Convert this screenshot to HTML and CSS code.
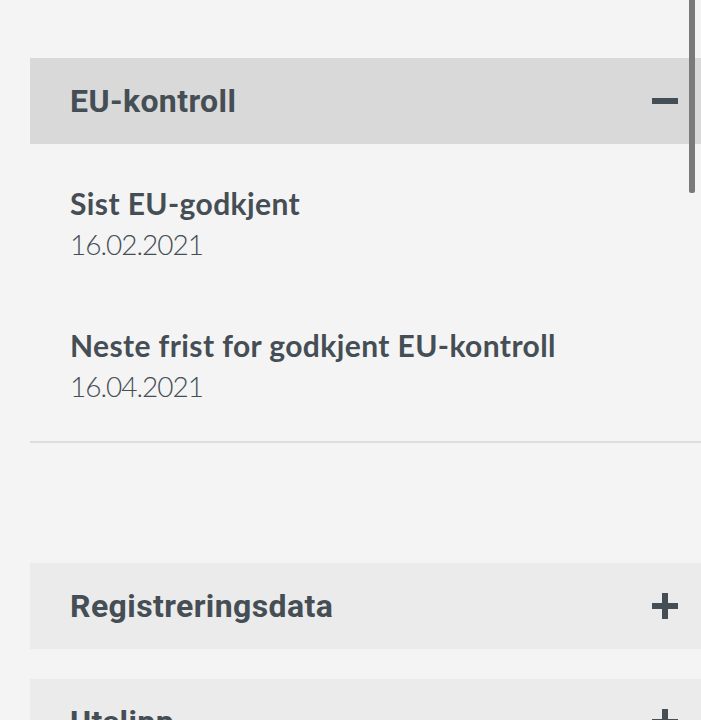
FILE: index.html
```html
<!DOCTYPE html>
<html lang="no">
<head>
<meta charset="utf-8">
<link rel="stylesheet" href="styles.css">
</head>
<body>
<main class="page">
  <section class="panel open">
    <div class="panel-head">
      <h2 class="panel-title">EU-kontroll</h2>
      <svg class="toggle" width="26" height="26" viewBox="0 0 26 26"><rect x="0" y="10" width="26" height="6" fill="#454e55"/></svg>
    </div>
    <div class="panel-body">
      <div class="item">
        <div class="item-label">Sist EU-godkjent</div>
        <div class="item-value">16.02.2021</div>
      </div>
      <div class="item">
        <div class="item-label">Neste frist for godkjent EU-kontroll</div>
        <div class="item-value">16.04.2021</div>
      </div>
    </div>
  </section>
  <section class="panel">
    <div class="panel-head">
      <h2 class="panel-title">Registreringsdata</h2>
      <svg class="toggle" width="26" height="26" viewBox="0 0 26 26"><rect x="0" y="10" width="26" height="6" fill="#454e55"/><rect x="10" y="0" width="6" height="26" fill="#454e55"/></svg>
    </div>
  </section>
  <section class="panel">
    <div class="panel-head">
      <h2 class="panel-title">Utslipp</h2>
      <svg class="toggle" width="26" height="26" viewBox="0 0 26 26"><rect x="0" y="10" width="26" height="6" fill="#454e55"/><rect x="10" y="0" width="6" height="26" fill="#454e55"/></svg>
    </div>
  </section>
</main>
<div class="scrollbar"></div>
</body>
</html>
```

FILE: styles.css
```css
html, body {
  margin: 0;
  padding: 0;
  background: #f4f4f4;
  overflow: hidden;
}
body {
  font-family: Lato, "Open Sans", "Liberation Sans", sans-serif;
  color: #454e55;
}
.page {
  padding: 58px 0 0 30px;
  display: flex;
  flex-direction: column;
  gap: 30px;
}
.panel-head {
  height: 86px;
  background: #ebebeb;
  display: flex;
  align-items: center;
  justify-content: space-between;
  padding: 0 23px 0 40px;
}
.panel.open .panel-head {
  background: #d9d9d9;
}
.panel-title {
  margin: 0;
  font-family: Roboto, "Liberation Sans", sans-serif;
  font-weight: 700;
  font-size: 32px;
  letter-spacing: 0.4px;
  color: #454e55;
}
.toggle {
  display: block;
  flex: none;
}
.panel-body {
  padding: 38px 0 35px 40px;
  border-bottom: 2px solid #dedede;
  margin-bottom: 90px;
  display: flex;
  flex-direction: column;
  gap: 60px;
}
.item-label {
  font-weight: 700;
  font-size: 30px;
  line-height: 42px;
  letter-spacing: 0.4px;
}
.item-value {
  font-weight: 300;
  font-size: 28px;
  line-height: 40px;
  letter-spacing: -1px;
}
.scrollbar {
  position: fixed;
  top: 0;
  left: 689px;
  width: 6px;
  height: 193px;
  background: #7a7a7a;
  border-radius: 0 0 2px 2px;
}
```
